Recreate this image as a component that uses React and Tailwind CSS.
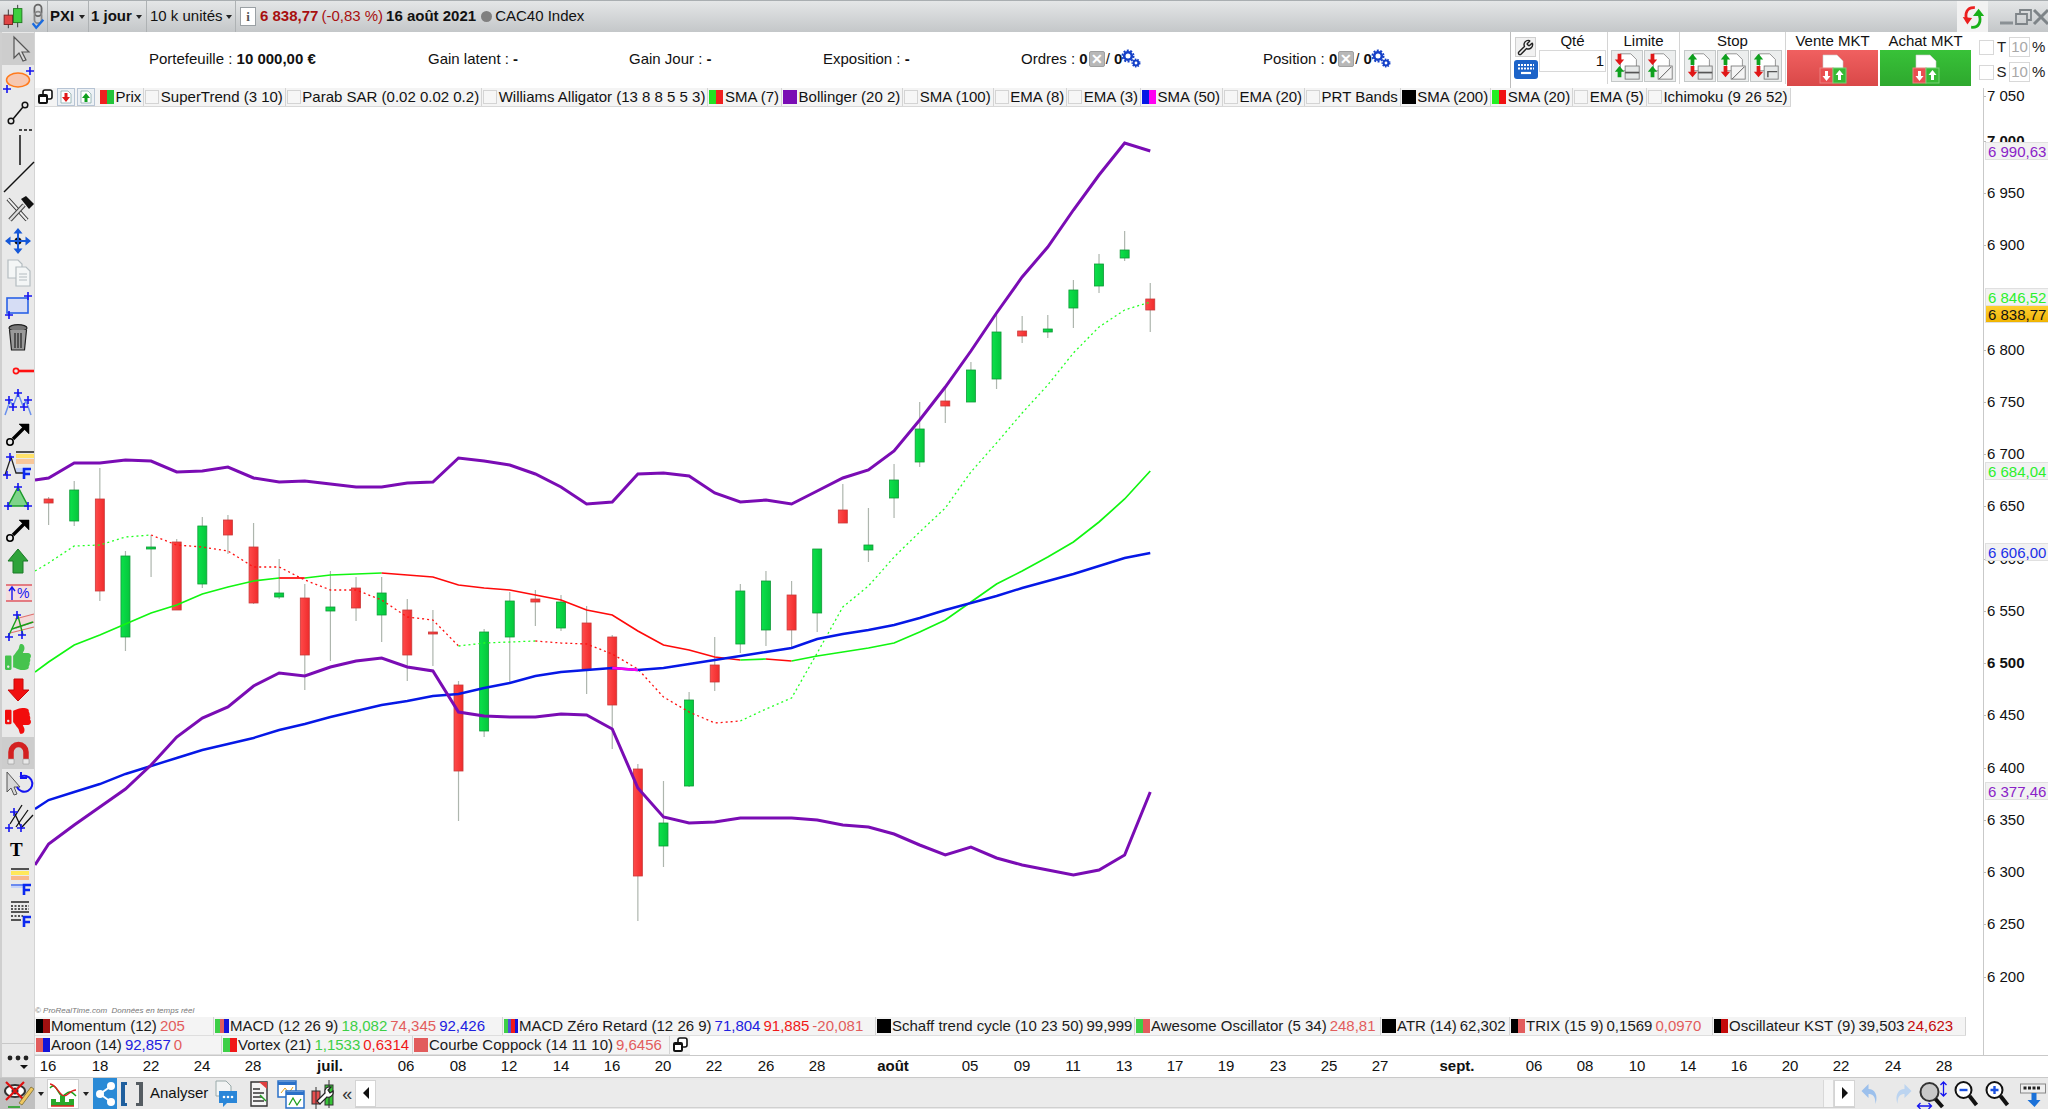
import { FaThumbsUp, FaThumbsDown } from "react-icons/fa";
import { Wrench } from "lucide-react";

const X = (i) => 48.6 + 25.62 * i;

// [kind, bodyTop, bodyBottom, wickTop, wickBottom]
const CANDLES = [
  ["r", 499, 503, 497, 525], ["g", 490, 521, 481, 526], ["r", 499, 591, 468, 601], ["g", 556, 637, 551, 651],
  ["g", 547, 549, 535, 577], ["r", 542, 610, 539, 610], ["g", 526, 584, 517, 588], ["r", 520, 535, 515, 554],
  ["r", 547, 603, 523, 604], ["g", 593, 597, 559, 599], ["r", 598, 655, 584, 690], ["g", 607, 611, 571, 661],
  ["r", 588, 608, 577, 621], ["g", 593, 615, 577, 642], ["r", 610, 655, 599, 681], ["r", 632, 634, 610, 666],
  ["r", 685, 771, 681, 821], ["g", 632, 731, 629, 737], ["g", 601, 637, 592, 683], ["r", 599, 602, 590, 626],
  ["g", 602, 628, 595, 631], ["r", 623, 669, 606, 694], ["r", 637, 705, 635, 749], ["r", 769, 876, 764, 921],
  ["g", 823, 846, 781, 867], ["g", 700, 786, 692, 787], ["r", 665, 682, 637, 691], ["g", 591, 644, 584, 653],
  ["g", 581, 630, 571, 646], ["r", 595, 630, 581, 647], ["g", 549, 613, 549, 632], ["r", 510, 523, 484, 523],
  ["g", 545, 550, 508, 562], ["g", 480, 498, 464, 518], ["g", 429, 462, 402, 467], ["r", 401, 406, 387, 423],
  ["g", 370, 402, 362, 402], ["g", 332, 379, 315, 389], ["r", 331, 336, 316, 343], ["g", 329, 332, 315, 338],
  ["g", 290, 308, 280, 328], ["g", 264, 286, 254, 293], ["g", 250, 258, 231, 261], ["r", 299, 310, 283, 332],
];

// the first value of each line sits at the left edge of the chart
const UPPER = [480, 478, 463, 463, 460, 461, 472, 471, 467, 478, 482, 481, 484, 487, 487, 483, 482, 458, 461, 465, 474, 487, 504, 502, 474, 473, 476, 493, 502, 500, 504, 491, 478, 470, 451, 420, 387, 351, 313, 277, 247, 210, 175, 143, 151];
const LOWER = [865, 844, 825, 807, 789, 765, 737, 718, 707, 686, 673, 676, 667, 661, 658, 667, 671, 712, 716, 717, 717, 714, 715, 729, 788, 817, 823, 822, 818, 818, 818, 820, 825, 827, 834, 845, 855, 847, 858, 865, 870, 875, 870, 855, 792];
const BLUE = [809, 800, 792, 784, 774, 766, 758, 750, 744, 738, 730, 724, 717, 711, 705, 701, 696, 694, 688, 683, 676, 672, 670, 668, 670, 668, 664, 660, 656, 652, 648, 639, 634, 630, 625, 618, 610, 603, 596, 588, 581, 574, 566, 558, 553];
const SMA20 = [672, 662, 645, 635, 624, 613, 605, 594, 587, 581, 578, 578, 575, 574, 573, 575, 577, 585, 588, 590, 595, 600, 610, 615, 631, 645, 650, 657, 660, 659, 661, 656, 652, 648, 643, 632, 620, 602, 584, 571, 557, 542, 522, 499, 471];
const SMA20_C = "gggggggggggrgggrrrrrrrrrrrrrrgrggggggggggggggg";
const SMA7 = [571, 563, 546, 545, 537, 535, 545, 547, 551, 567, 567, 580, 590, 590, 600, 617, 620, 646, 643, 642, 641, 643, 644, 654, 669, 697, 712, 723, 721, 709, 698, 653, 607, 586, 557, 532, 508, 472, 443, 413, 385, 353, 327, 310, 302];
const SMA7_C = "ggggggrrrrrrrrrrrrgggrrrrrrrrggggggggggggggggggg";

const pts = (arr) => arr.map((y, k) => `${k === 0 ? 35 : X(k - 1)},${y}`);

function runs(arr, colors) {
  const out = [];
  const p = pts(arr);
  for (let k = 1; k < arr.length; k++) {
    const c = colors[k];
    const last = out[out.length - 1];
    if (last && last.c === c) last.p.push(p[k]);
    else out.push({ c, p: [p[k - 1], p[k]] });
  }
  return out;
}

function Chart() {
  return (
    <svg className="absolute inset-0 w-full h-full" viewBox="35 88 1948 967">
      <defs>
        <linearGradient id="gb" x1="0" x2="1" y1="0" y2="0">
          <stop offset="0" stopColor="#0be04a" /><stop offset="1" stopColor="#06c63c" />
        </linearGradient>
        <linearGradient id="rb" x1="0" x2="1" y1="0" y2="0">
          <stop offset="0" stopColor="#ff4a4a" /><stop offset="1" stopColor="#f02c2c" />
        </linearGradient>
      </defs>
      {CANDLES.map(([k, t, b, wt, wb], i) => (
        <g key={i}>
          <line x1={X(i)} x2={X(i)} y1={wt} y2={wb} stroke="#aeb6ae" strokeWidth="1.2" />
          <rect x={X(i) - 4.5} y={t} width="9" height={Math.max(b - t, 2)} fill={k === "g" ? "url(#gb)" : "url(#rb)"} stroke={k === "g" ? "#109a38" : "#c93a3a"} strokeWidth="0.8" />
        </g>
      ))}
      {runs(SMA7, SMA7_C).map((r, i) => (
        <polyline key={i} points={r.p.join(" ")} fill="none" stroke={r.c === "g" ? "#22ff22" : "#ff1111"} strokeWidth="1.3" strokeDasharray="2 3" />
      ))}
      {runs(SMA20, SMA20_C).map((r, i) => (
        <polyline key={i} points={r.p.join(" ")} fill="none" stroke={r.c === "g" ? "#11f511" : "#ff0a0a"} strokeWidth="1.7" />
      ))}
      <polyline points={pts(BLUE).join(" ")} fill="none" stroke="#0618e6" strokeWidth="2.4" />
      <line x1={X(22)} x2={X(23)} y1="668" y2="670" stroke="#ff00f0" strokeWidth="2.4" />
      <polyline points={pts(UPPER).join(" ")} fill="none" stroke="#7a0cb4" strokeWidth="3" />
      <polyline points={pts(LOWER).join(" ")} fill="none" stroke="#7a0cb4" strokeWidth="3" />
    </svg>
  );
}

const Plus = ({ x, y }) => <path d={`M${x - 4} ${y}h8M${x} ${y - 4}v8`} stroke="#1414f0" strokeWidth="1.6" fill="none" />;
const BlackArrow = () => (
  <g fill="none" stroke="#000">
    <circle cx="8" cy="25" r="3.2" strokeWidth="1.6" />
    <path d="M11 22L22 11" strokeWidth="3.4" />
    <path d="M17 7h10v10z" fill="#000" strokeWidth="0.5" />
  </g>
);
const FLetter = () => <path d="M22 30V20h7M22 25h6" stroke="#0a28f0" strokeWidth="2.6" fill="none" />;

const TOOLS = [
  <g key="a"><path d="M12 4v21l5-5 4 8 3-1-4-8h7z" fill="#d8d8d8" stroke="#555" strokeWidth="1.2" /></g>,
  <g key="b"><ellipse cx="16" cy="15" rx="11.5" ry="7" fill="#f6c8b2" stroke="#ff7a1c" strokeWidth="1.5" /><Plus x={28} y={6} /><Plus x={5} y={24} /></g>,
  <g key="c" fill="none" stroke="#111" strokeWidth="1.5"><circle cx="9" cy="24" r="2.8" /><circle cx="23" cy="8" r="2.8" /><path d="M11 22L21 10" /></g>,
  <g key="d" stroke="#111" fill="none"><path d="M18 6v30" strokeWidth="1.5" /><path d="M17 1h14" strokeDasharray="3 2" strokeWidth="1.4" /></g>,
  <path key="e" d="M2 31L32 1" stroke="#111" strokeWidth="1.5" />,
  <g key="f"><path d="M6 6l19 21" stroke="#333" strokeWidth="4" /><path d="M6 6l19 21" stroke="#eee" strokeWidth="2" /><path d="M8 27L22 12" stroke="#444" strokeWidth="4.5" /><path d="M8 27L22 12" stroke="#ddd" strokeWidth="2.5" /><path d="M19 6l5-3 8 8-5 5z" fill="#111" /></g>,
  <g key="g" fill="#1658d8"><circle cx="16" cy="16" r="3.5" fill="#111" /><path d="M16 3l4.500 5.500h-9zM16 29l-4.500-5.500h9zM3 16l5.500-4.500v9zM29 16l-5.500 4.500v-9z" /><path d="M16 8v16M8 16h16" stroke="#1658d8" strokeWidth="2" /></g>,
  <g key="h" fill="#f4f6f6" stroke="#b4bcc0" strokeWidth="1.2"><path d="M6 3h10l4 4v14H6z" /><path d="M14 10h10l4 4v15H14z" /><path d="M17 17h8M17 20h8M17 23h8" /></g>,
  <g key="i"><rect x="5" y="9" width="21" height="15" fill="#d6ddf5" stroke="#2a62e6" strokeWidth="1.6" /><Plus x={26} y={7} /><Plus x={7} y={26} /></g>,
  <g key="j" fill="#9a9a9a" stroke="#222" strokeWidth="1.2"><ellipse cx="16" cy="7" rx="9" ry="3.4" fill="#777" /><path d="M7.5 9l2 20h13l2-20" /><path d="M13 12v15M16 12v15M19 12v15" /></g>,
  <g key="k" fill="none" stroke="#ff1010"><circle cx="14" cy="18" r="2.6" strokeWidth="1.6" /><path d="M17 18h15" strokeWidth="2.6" /></g>,
  <g key="l"><path d="M3 30L8 16l3 5 5-13 5 13 3-5 5 14" fill="none" stroke="#6a90ec" strokeWidth="1.5" /><Plus x={7} y={15} /><Plus x={16} y={8} /><Plus x={26} y={15} /><Plus x={11} y={22} /><Plus x={22} y={22} /></g>,
  <g key="m"><BlackArrow /></g>,
  <g key="n"><path d="M14 3h18" stroke="#111" strokeWidth="1.4" /><rect x="14" y="5" width="18" height="4" fill="#ffe26a" /><rect x="14" y="10" width="18" height="5" fill="#f8c79a" /><rect x="14" y="19" width="14" height="5" fill="#c6d4f8" /><path d="M3 26L9 8l5 16h8" fill="none" stroke="#222" strokeWidth="1.3" /><Plus x={8} y={8} /><Plus x={5} y={26} /><FLetter /></g>,
  <g key="o"><path d="M16 6L6 25h20z" fill="#7ed48a" stroke="#1a9a2a" strokeWidth="1.5" /><Plus x={16} y={6} /><Plus x={6} y={25} /><Plus x={26} y={25} /></g>,
  <g key="p"><BlackArrow /></g>,
  <path key="q" d="M16 4L6 16h5v12h10V16h5z" fill="#2ea33a" stroke="#1b7a26" strokeWidth="1" />,
  <g key="r"><rect x="4" y="8" width="26" height="16" fill="#f4dfe0" /><path d="M4 8h26M4 24h26" stroke="#e05a62" strokeWidth="1.4" /><path d="M10 23V11M7 14l3-4 3 4" stroke="#1414f0" strokeWidth="1.4" fill="none" /><text x="15" y="21" fontSize="14" fill="#1414f0">%</text></g>,
  <g key="s"><path d="M13 10L32 5v7l-19 7z" fill="#f3d9d9" /><path d="M13 10L32 5M14 19l18-6M8 24l24-6" stroke="#e0706e" strokeWidth="1.2" /><path d="M6 28l10-21 5 19" fill="none" stroke="#18a018" strokeWidth="1.4" /><path d="M10 20L31 13" stroke="#18a018" strokeWidth="1.4" /><Plus x={15} y={6} /><Plus x={7} y={28} /><Plus x={20} y={26} /></g>,
  null,
  <path key="t" d="M16 28L6 17h6V6h9v11h6z" fill="#f01010" stroke="#c80808" />,
  null,
  <g key="u" fill="none"><path d="M9 24V15a7.500 7.500 0 0 1 15 0v9" stroke="#d32020" strokeWidth="5.500" /><path d="M6 22h6v5H6zM21 22h6v5h-6z" fill="#e8e8e8" stroke="#999" strokeWidth="0.6" /></g>,
  <g key="v"><path d="M5 3v20l4-4 3 7 3-1-3-7h6z" fill="#d8d8d8" stroke="#555" /><path d="M18 8a8 8 0 1 1-3 10M19 3v6h6" fill="none" stroke="#1414f0" strokeWidth="2" /></g>,
  <g key="w"><path d="M8 23L20 4M14 26L26 9M20 26L31 14" stroke="#111" strokeWidth="1.3" /><path d="M12 11L20 28" stroke="#111" strokeWidth="1.3" /><Plus x={12} y={11} /><Plus x={7} y={27} /><Plus x={19} y={27} /></g>,
  <text key="x" x="8" y="23" fontSize="19" fontWeight="700" fontFamily="Liberation Serif">T</text>,
  <g key="y"><path d="M9 4h18" stroke="#111" strokeWidth="1.4" /><rect x="9" y="6" width="18" height="4" fill="#ffe85a" /><rect x="9" y="11" width="18" height="4" fill="#f8b88a" /><rect x="9" y="19" width="14" height="4" fill="#c6d4f8" /><path d="M9 20h12" stroke="#3860e8" strokeWidth="1.3" /><FLetter /></g>,
  <g key="z" stroke="#222" strokeWidth="1.3"><path d="M9 5h18M9 15h18M9 23h10" /><path d="M9 9h18M9 12h18M9 19h12" strokeDasharray="2 1.500" /><FLetter /></g>,
];

function ToolBar() {
  return (
    <div className="w-[35px] shrink-0 bg-[#e9e9e9] border-l-2 border-r border-l-[#cfcfcf] border-r-[#d4d4d4] flex flex-col pt-px">
      {TOOLS.map((t, i) => (
        <div key={i} className={"h-8 w-8 shrink-0 flex items-center justify-center " + (i === 0 || i === 22 ? "bg-[#cdcdcd] " : "")}>
          {i === 19 ? <FaThumbsUp className="w-[26px] h-[26px] text-[#46c34e]" />
            : i === 21 ? <FaThumbsDown className="w-[26px] h-[26px] text-[#f20c0c]" />
            : <svg viewBox="0 0 32 32" className="w-8 h-8 overflow-visible">{t}</svg>}
        </div>
      ))}
      <div className="mt-auto h-[34px] border-t border-[#c8c8c8] flex flex-col items-center pt-[10px]">
        <svg viewBox="0 0 24 18" className="w-6 h-[18px]">
          <circle cx="4" cy="4" r="2.400" fill="#222" /><circle cx="12" cy="4" r="2.400" fill="#222" /><circle cx="20" cy="4" r="2.400" fill="#222" />
          <path d="M14 11h8l-4 4z" fill="#111" />
        </svg>
      </div>
    </div>
  );
}

const Caret = ({ c = "" }) => <span className={"inline-block w-0 h-0 border-x-[3.5px] border-x-transparent border-t-[4px] border-t-[#222] " + c} />;

function TopBar() {
  return (
    <div className="h-8 shrink-0 flex items-center bg-gradient-to-b from-[#e4e6e7] to-[#c4c7c9] border-t border-[#a9aeb1] text-[15px] text-[#111]">
      <svg viewBox="0 0 26 30" className="w-[26px] h-[28px] shrink-0">
        <path d="M8 7v20" stroke="#333" /><rect x="3.500" y="13" width="9" height="10" fill="#e04545" stroke="#7a2222" />
        <path d="M18 2v24" stroke="#333" /><rect x="13.500" y="6" width="9" height="15" fill="#3ecf3e" stroke="#1f7a1f" />
      </svg>
      <svg viewBox="0 0 18 30" className="ml-[4px] w-[16px] h-[30px] shrink-0">
        <rect x="5" y="1" width="8" height="13" rx="4" fill="none" stroke="#666" strokeWidth="2" /><rect x="5" y="9" width="8" height="13" rx="4" fill="none" stroke="#888" strokeWidth="2" />
        <path d="M3 22l4 5 8-9" fill="none" stroke="#1a6be0" strokeWidth="2.600" />
      </svg>
      <div className="ml-[1px] w-[41px] h-full border-l border-[#aeb2b4] flex items-center pl-[2px] gap-[5px] font-bold">PXI<Caret /></div>
      <div className="w-[58px] h-full border-l border-[#aeb2b4] flex items-center pl-[2px] gap-[4px] font-bold whitespace-nowrap">1 jour<Caret /></div>
      <div className="w-[89px] h-full border-l border-[#aeb2b4] flex items-center pl-[3px] gap-[3px] whitespace-nowrap">10 k unités<Caret /></div>
      <div className="h-full border-l border-[#aeb2b4] flex items-center pl-[4px] whitespace-nowrap">
        <span className="w-4 h-[19px] bg-white border border-[#9aa0a4] flex items-center justify-center text-[13px] font-bold text-[#555] [font-family:'Liberation_Serif',serif]">i</span>
        <span className="ml-[4px] font-bold text-[#a80f0f]">6 838,77</span>
        <span className="ml-[3px] text-[#a80f0f]">(-0,83 %)</span>
        <span className="ml-[3px] font-bold">16 août 2021</span>
        <span className="ml-[5px] w-[11px] h-[11px] rounded-full bg-[#808080]" />
        <span className="ml-[3px]">CAC40 Index</span>
      </div>
      <div className="ml-auto h-full w-[31px] bg-[#f2f2f2] flex items-center justify-center">
        <svg viewBox="0 0 28 28" className="w-[26px] h-[26px]">
          <path d="M16 4C8 3 4 10 8 19" fill="none" stroke="#ec2020" strokeWidth="3" /><path d="M3 14l5 8 5-7z" fill="#ec2020" />
          <path d="M12 25c8 1 12-6 8-15" fill="none" stroke="#18b018" strokeWidth="3" /><path d="M14 13l6-8 6 8z" fill="#18b018" />
        </svg>
      </div>
      <svg viewBox="0 0 60 20" className="w-[60px] h-5 shrink-0">
        <path d="M12 16h13" stroke="#8a9094" strokeWidth="3" />
        <path d="M28 7h11v10H28z M32 7V3h11v10h-4" fill="none" stroke="#7e8488" strokeWidth="1.800" />
        <path d="M46 3l14 14M60 3L46 17" stroke="#7e8488" strokeWidth="3" />
      </svg>
    </div>
  );
}

const Gear = () => (
  <svg viewBox="0 0 20 20" className="w-[20px] h-[20px] -ml-[1px]">
    <circle cx="7" cy="7" r="3.800" fill="none" stroke="#1440c8" strokeWidth="2.600" />
    <circle cx="7" cy="7" r="5.600" fill="none" stroke="#1440c8" strokeWidth="1.800" strokeDasharray="2 1.500" />
    <circle cx="15" cy="14" r="2.400" fill="none" stroke="#1440c8" strokeWidth="2" />
    <circle cx="15" cy="14" r="3.800" fill="none" stroke="#1440c8" strokeWidth="1.400" strokeDasharray="1.500 1.200" />
  </svg>
);
const XBox = () => (
  <span className="w-[16px] h-[16px] rounded-[2px] bg-[#b8b8b8] border border-[#a0a0a0] text-white text-[14px] leading-[14px] font-bold flex items-center justify-center mx-[1px]">✕</span>
);

const Up = ({ x, y, s = 1 }) => <path transform={`translate(${x} ${y}) scale(${s})`} d="M0 -6l5 6h-3v6h-4v-6h-3z" fill="#0ea01e" />;
const Down = ({ x, y, s = 1 }) => <path transform={`translate(${x} ${y}) scale(${s})`} d="M0 6l5 -6h-3v-6h-4v6h-3z" fill="#e01818" />;

function OrderBtn({ first, glyph }) {
  return (
    <div className="w-[32px] h-[32px] bg-[#eceeee] border border-[#c4c8c8] flex items-center justify-center">
      <svg viewBox="0 0 32 32" className="w-[32px] h-[32px]">
        <path d="M9 3h11l6 6v12H9z" fill="#fff" stroke="#777" strokeWidth="0.8" />
        <rect x="14" y="16" width="15" height="14" fill={glyph === "slash" ? "#f4f4f4" : "#e6e8e8"} stroke="#777" strokeWidth="0.9" />
        {glyph === "bars" && <path d="M14 23h15" stroke="#555" strokeWidth="1.800" />}
        {glyph === "slash" && <path d="M15 30l13-13" stroke="#555" strokeWidth="1" />}
        {glyph === "step" && <path d="M18 28v-6h10" fill="none" stroke="#555" strokeWidth="1.500" />}
        {first === "down" ? <><Down x={8} y={9} /><Up x={8} y={22} /></> : <><Up x={8} y={9} /><Down x={8} y={22} /></>}
      </svg>
    </div>
  );
}

function MktBtn({ from, to, label }) {
  return (
    <div className="flex flex-col items-center w-[91px]">
      <span className="h-[18px] leading-[18px]">{label}</span>
      <div className={"w-full h-[36px] flex items-center justify-center bg-gradient-to-b " + from + " " + to}>
        <svg viewBox="0 0 30 36" className="w-[30px] h-[36px]">
          <path d="M5 5h14l6 6v10H5z" fill="#fff" stroke="#ccc" strokeWidth="0.6" />
          <rect x="2" y="18" width="13" height="15" fill="#e94e50" stroke="#ec8080" />
          <rect x="15" y="18" width="13" height="15" fill="#36b934" stroke="#74d074" />
          <path d="M8.500 31l-4-5h2.500v-5h3v5h2.500z" fill="#fff" />
          <path d="M21.500 20l4 5H23v5h-3v-5h-2.500z" fill="#fff" />
        </svg>
      </div>
    </div>
  );
}

function Header() {
  return (
    <div className="h-14 shrink-0 flex bg-white text-[15px] text-[#111] relative">
      <div className="flex-1 flex items-center pl-[114px] pb-[2px] whitespace-nowrap">
        <div className="w-[279px]">Portefeuille : <b>10 000,00 €</b></div>
        <div className="w-[201px]">Gain latent : <b>-</b></div>
        <div className="w-[194px]">Gain Jour : <b>-</b></div>
        <div className="w-[198px]">Exposition : <b>-</b></div>
        <div className="w-[242px] flex items-center">Ordres :&nbsp;<b>0</b><XBox />/&nbsp;<b>0</b><Gear /></div>
        <div className="flex items-center">Position :&nbsp;<b>0</b><XBox />/&nbsp;<b>0</b><Gear /></div>
      </div>
      <div className="w-[538px] shrink-0 border-l border-[#bcbcbc] flex pl-[2px]">
        <div className="w-[25px] flex flex-col items-center pt-[5px] gap-[3px]">
          <div className="w-[21px] h-[20px] bg-[#f1f1f1] border border-[#cfcfcf] flex items-center justify-center"><Wrench className="w-[17px] h-[17px] text-[#222]" /></div>
          <svg viewBox="0 0 24 19" className="w-[24px] h-[19px]">
            <rect width="24" height="19" rx="3" fill="#1c63c8" />
            <path d="M4 5h16M4 8.500h16" stroke="#fff" strokeWidth="2.200" strokeDasharray="2 1" />
            <path d="M7 13h10" stroke="#fff" strokeWidth="2.200" />
          </svg>
        </div>
        <div className="w-[70px] flex flex-col items-center border-r border-[#d4d4d4] mb-[4px]">
          <span className="h-[18px] leading-[18px]">Qté</span>
          <div className="w-[67px] h-[22px] border border-[#d8d8d8] text-right pr-[1px] leading-[20px]">1</div>
        </div>
        <div className="w-[72px] flex flex-col items-center border-r border-[#d4d4d4] mb-[4px]">
          <span className="h-[18px] leading-[18px]">Limite</span>
          <div className="flex gap-[1px]"><OrderBtn first="down" glyph="bars" /><OrderBtn first="down" glyph="slash" /></div>
        </div>
        <div className="w-[106px] flex flex-col items-center border-r border-[#d4d4d4] mb-[4px]">
          <span className="h-[18px] leading-[18px]">Stop</span>
          <div className="flex gap-[1px]"><OrderBtn first="up" glyph="bars" /><OrderBtn first="up" glyph="slash" /><OrderBtn first="up" glyph="step" /></div>
        </div>
        <div className="flex gap-[2px] ml-[1px]">
          <MktBtn from="from-[#f06060]" to="to-[#d94848]" label="Vente MKT" />
          <MktBtn from="from-[#38c238]" to="to-[#2ea82e]" label="Achat MKT" />
        </div>
        <div className="ml-[8px] flex flex-col pt-[6px] gap-[7px] text-[#222]">
          {["T", "S"].map((l) => (
            <div key={l} className="flex items-center h-[18px]">
              <span className="w-[15px] h-[15px] border border-[#d8d8d8]" />
              <span className="w-[15px] text-center">{l}</span>
              <span className="w-[21px] h-[20px] border border-[#d8d8d8] text-[#a8a8a8] text-center leading-[18px]">10</span>
              <span className="ml-[2px]">%</span>
            </div>
          ))}
        </div>
      </div>
    </div>
  );
}

const Cascade = () => (
  <svg viewBox="0 0 16 16" className="w-4 h-4 shrink-0">
    <rect x="6" y="1" width="9" height="9" rx="2" fill="#fff" stroke="#111" strokeWidth="1.600" />
    <rect x="1" y="5" width="10" height="10" rx="2" fill="#111" />
    <rect x="3" y="8" width="6" height="5" fill="#fff" />
  </svg>
);
const DocArrow = ({ up }) => (
  <span className="w-[18px] h-[18px] bg-[#edf1f5] border border-[#b7c4d4] flex items-center justify-center shrink-0">
    <svg viewBox="0 0 14 14" className="w-[14px] h-[14px]">
      <path d="M2 1h7l3 3v9H2z" fill="#fff" stroke="#8aa" strokeWidth="0.800" />
      {up ? <path d="M7 3l4 5H8.500v4h-3V8H3z" fill="#0ea01e" /> : <path d="M7 12l4-5H8.500V3h-3v4H3z" fill="#e01818" />}
    </svg>
  </span>
);

const Swatch = ({ colors = [] }) => (
  <span className={"w-[14px] h-[14px] shrink-0 flex " + (colors.length ? "" : "bg-[#f6f6f6] border border-[#d4d4d4]")}>
    {colors.map((c, i) => <span key={i} className="flex-1" style={{ background: c }} />)}
  </span>
);

const LEGEND = [
  ["Prix", ["#f02020", "#22c43a"]], ["SuperTrend (3 10)"], ["Parab SAR (0.02 0.02 0.2)"], ["Williams Alligator (13 8 8 5 5 3)"],
  ["SMA (7)", ["#22e022", "#f02020"]], ["Bollinger (20 2)", ["#7a0cb4"]], ["SMA (100)"], ["EMA (8)"], ["EMA (3)"],
  ["SMA (50)", ["#0618e6", "#ff00f0"]], ["EMA (20)"], ["PRT Bands"], ["SMA (200)", ["#000"]], ["SMA (20)", ["#22f022", "#f01010"]],
  ["EMA (5)"], ["Ichimoku (9 26 52)"],
];

function Legend() {
  return (
    <div className="absolute left-0 top-0 h-[19px] flex items-center bg-[#f4f4f4] border-b border-[#d8d8d8] text-[15px] leading-[18px] text-[#111] whitespace-nowrap pl-[2px]">
      <Cascade />
      <span className="ml-[4px]"><DocArrow /></span>
      <span className="ml-[2px] mr-[4px]"><DocArrow up /></span>
      {LEGEND.map(([t, c]) => (
        <div key={t} className="flex items-center gap-[1.5px] pl-[1px] pr-[2px] border-r border-[#d4d4d4] h-full">
          <Swatch colors={c} />
          <span>{t}</span>
        </div>
      ))}
    </div>
  );
}

const INK = "#1a1a1a", SALMON = "#e25c5c", GREEN = "#3ccf46", BLUEV = "#2020e0", RED = "#f01818", DARKRED = "#c40a0a";
// label, swatch colours, values, width of the cell
const ROW1 = [
  ["Momentum (12)", ["#000", "#a01010"], [["205", SALMON]], 179],
  ["MACD (12 26 9)", ["#3ccf46", "#e25c5c", "#1414d8"], [["18,082", GREEN], ["74,345", SALMON], ["92,426", BLUEV]], 289],
  ["MACD Zéro Retard (12 26 9)", ["#3ccf46", "#5050d8", "#f01818", "#1414d8"], [["71,804", BLUEV], ["91,885", RED], ["-20,081", SALMON]], 373],
  ["Schaff trend cycle (10 23 50)", ["#000"], [["99,999", INK]], 259],
  ["Awesome Oscillator (5 34)", ["#3ccf46", "#e25c5c"], [["248,81", SALMON]], 246],
  ["ATR (14)", ["#000"], [["62,302", INK]], 129],
  ["TRIX (15 9)", ["#000", "#e25c5c"], [["0,1569", INK], ["0,0970", SALMON]], 203],
  ["Oscillateur KST (9)", ["#000", "#c40a0a"], [["39,503", INK], ["24,623", DARKRED]], 253],
];
const ROW2 = [
  ["Aroon (14)", ["#e25c5c", "#1414d8"], [["92,857", BLUEV], ["0", SALMON]], 187],
  ["Vortex (21)", ["#3ccf46", "#f01818"], [["1,1533", GREEN], ["0,6314", RED]], 191],
  ["Courbe Coppock (14 11 10)", ["#e25c5c"], [["9,6456", SALMON]], 257],
];

function IndRow({ items, extra }) {
  return (
    <div className="h-[19px] flex items-center bg-[#f4f4f4] border-b border-[#dedede] w-fit text-[15px] text-[#1a1a1a] whitespace-nowrap">
      {items.map(([t, c, vals, w]) => (
        <div key={t} className="flex items-center h-full gap-[1px] pl-[1px] border-r border-[#d4d4d4] shrink-0" style={{ width: w }}>
          <Swatch colors={c} />
          <span>{t}</span>
          <span className="flex gap-[3px] ml-[2px]">{vals.map(([v, col]) => <span key={v} style={{ color: col }}>{v}</span>)}</span>
        </div>
      ))}
      {extra}
    </div>
  );
}

// 6 850 stays fully covered by the tag of the moving average in the picture
const TICKS = [
  [7050, 96], [7000, 141], [6950, 193], [6900, 245], [6800, 350], [6750, 402], [6700, 454], [6650, 506], [6600, 559],
  [6550, 611], [6500, 663], [6450, 715], [6400, 768], [6350, 820], [6300, 872], [6250, 924], [6200, 977],
];
const TAGS = [
  ["6 990,63", 151, "text-[#8a22c8]", "bg-[#f2f2f2]"], ["6 846,52", 297, "text-[#2cf02c]", "bg-[#f2f2f2]"],
  ["6 838,77", 314, "text-[#111]", "bg-gradient-to-b from-[#ffcf2e] to-[#f0b400]"], ["6 684,04", 471, "text-[#2cf02c]", "bg-[#f2f2f2]"],
  ["6 606,00", 552, "text-[#1a30e8]", "bg-[#f2f2f2]"], ["6 377,46", 791, "text-[#8a22c8]", "bg-[#f2f2f2]"],
];
const fmt = (v) => `${String(v)[0]} ${String(v).slice(1)}`;

function Axis() {
  return (
    <div className="w-[65px] shrink-0 relative bg-white border-l border-[#c9c9c9] text-[15px] text-[#111] whitespace-nowrap overflow-hidden">
      {TICKS.map(([v, y]) => (
        <div key={v} className={"absolute left-0 flex items-center h-[18px] " + (v === 7000 || v === 6500 ? "font-bold" : "")} style={{ top: y - 88 - 9 }}>
          <span className="w-[2px] h-px bg-[#bbb] mr-[1px]" />{fmt(v)}
        </div>
      ))}
      {TAGS.map(([t, y, c, bg]) => (
        <div key={t} className={"absolute left-[1px] w-[64px] h-[18px] leading-[18px] pl-[2px] border border-[#e0e0e0] border-r-0 " + c + " " + bg} style={{ top: y - 88 - 9 }}>{t}</div>
      ))}
    </div>
  );
}

const DATES = [
  ["16", 48], ["18", 100], ["22", 151], ["24", 202], ["28", 253], ["juil.", 330, 1], ["06", 406], ["08", 458], ["12", 509], ["14", 561], ["16", 612], ["20", 663],
  ["22", 714], ["26", 766], ["28", 817], ["août", 893, 1], ["05", 970], ["09", 1022], ["11", 1073], ["13", 1124], ["17", 1175], ["19", 1226], ["23", 1278], ["25", 1329],
  ["27", 1380], ["sept.", 1457, 1], ["06", 1534], ["08", 1585], ["10", 1637], ["14", 1688], ["16", 1739], ["20", 1790], ["22", 1841], ["24", 1893], ["28", 1944],
];

function DateAxis() {
  return (
    <div className="h-[22px] shrink-0 relative bg-white border-t border-[#c9c9c9] text-[15px] leading-[20px] text-[#111]">
      {DATES.map(([t, x, bold], i) => (
        <span key={i} className={"absolute top-0 -translate-x-1/2 " + (bold ? "font-bold" : "")} style={{ left: x - 35 }}>{t}</span>
      ))}
    </div>
  );
}

function BottomBar() {
  return (
    <div className="h-8 shrink-0 flex items-center bg-[#e9e9e9] border-t border-[#c9c9c9] text-[15px] text-[#111]">
      <div className="w-[35px] h-full bg-[#c0c0c0] flex items-center justify-center">
        <svg viewBox="0 0 32 30" className="w-8 h-[30px]">
          <ellipse cx="13" cy="12" rx="10" ry="6" fill="#fff" stroke="#333" strokeWidth="2" /><circle cx="13" cy="12" r="3.500" fill="#333" />
          <path d="M4 3l18 18M22 3L4 21" stroke="#e01010" strokeWidth="2.200" />
          <path d="M17 24L29 8l3 2-12 16z" fill="#f0c860" stroke="#7a6a30" strokeWidth="0.800" />
          <path d="M6 28h12" stroke="#18a018" strokeWidth="1.500" />
        </svg>
      </div>
      <Caret c="ml-[3px]" />
      <div className="ml-[3px] w-[32px] h-[30px] bg-white border border-[#cfcfcf] shrink-0">
        <svg viewBox="0 0 30 28" className="w-[30px] h-[28px]">
          <path d="M2 8c6-8 9 10 13 8s6-8 13 0" fill="none" stroke="#18a018" strokeWidth="1.400" />
          <path d="M2 4c6 0 10 12 14 12s6-6 12-6" fill="none" stroke="#e02020" strokeWidth="1.400" />
          <path d="M3 26v-7h5v3h4v-6h5v6h4v-3h5v7z" fill="#2aa82a" /><path d="M3 26h23" stroke="#e02020" strokeWidth="1.500" />
        </svg>
      </div>
      <Caret c="ml-[4px]" />
      <div className="ml-[4px] w-6 h-full bg-[#2a8ad6] flex items-center justify-center">
        <svg viewBox="0 0 22 26" className="w-[22px] h-[26px]">
          <path d="M6 13L17 5M6 13l11 8" stroke="#fff" strokeWidth="2" /><circle cx="6" cy="13" r="4" fill="#fff" /><circle cx="17" cy="5" r="4" fill="#fff" /><circle cx="17" cy="21" r="4" fill="#fff" />
        </svg>
      </div>
      <svg viewBox="0 0 24 28" className="ml-[3px] w-6 h-7 shrink-0">
        <path d="M1 2h6v3H5v18h2v3H1z" fill="#1f5f9e" /><path d="M23 2h-7v3h3v18h-3v3h7z" fill="#555c62" />
      </svg>
      <span className="ml-[6px]">Analyser</span>
      <svg viewBox="0 0 24 28" className="ml-[6px] w-6 h-7 shrink-0">
        <path d="M2 1h10l5 5v10H2z" fill="#f2f4f4" stroke="#9aa" /><path d="M5 11h18v12H13l-4 4v-4H5z" fill="#2a86d8" />
        <circle cx="10" cy="17" r="1.300" fill="#fff" /><circle cx="14" cy="17" r="1.300" fill="#fff" /><circle cx="18" cy="17" r="1.300" fill="#fff" />
      </svg>
      <svg viewBox="0 0 20 28" className="ml-[11px] w-5 h-7 shrink-0">
        <path d="M2 2h16v24H2z" fill="#f4f4f4" stroke="#333" strokeWidth="1.400" /><path d="M10 2h8v7z" fill="#e04040" />
        <path d="M4 9h7M4 13h11M4 17h9M4 21h11" stroke="#333" strokeWidth="1.500" /><path d="M11 15l6 6" stroke="#22a022" strokeWidth="1.500" />
      </svg>
      <svg viewBox="0 0 28 30" className="ml-[8px] w-7 h-[30px] shrink-0">
        <rect x="1" y="2" width="18" height="16" fill="#fff" stroke="#2a70c8" strokeWidth="1.500" /><path d="M1 3h18v3H1z" fill="#2a70c8" /><path d="M4 14l4-5 4 5 4-6" fill="none" stroke="#e0a020" />
        <rect x="9" y="12" width="18" height="17" fill="#fff" stroke="#2a70c8" strokeWidth="1.500" /><path d="M9 13h18v3H9z" fill="#2a70c8" /><path d="M12 26l4-7 4 7 4-6" fill="none" stroke="#20a020" strokeWidth="1.300" />
      </svg>
      <svg viewBox="0 0 24 30" className="ml-[6px] w-6 h-[30px] shrink-0">
        <rect x="1" y="12" width="8" height="13" fill="#e85050" stroke="#333" /><rect x="14" y="6" width="8" height="20" fill="#36c436" stroke="#333" />
        <path d="M18 1v28M5 8v22" stroke="#333" />
        <path d="M6 22l8-8c-1-4 2-7 6-6l-3 3 2 3 3-2c1 4-3 7-6 6l-7 7z" fill="#fff" stroke="#222" strokeWidth="1.200" />
      </svg>
      <span className="ml-[7px] w-[12px] text-[#333] leading-none text-[18px]">«</span>
      <div className="ml-[1px] flex-1 h-[28px] flex bg-[#ebebeb] border-b border-[#d0d0d0]">
        <div className="w-[21px] bg-white border border-[#d4d4d4] flex items-center justify-center"><span className="w-0 h-0 border-y-[6px] border-y-transparent border-r-[6px] border-r-[#111]" /></div>
        <div className="flex-1" />
        <div className="w-[11px] bg-[#f5f5f5] border-x border-[#d8d8d8]" />
        <div className="w-[21px] bg-white border border-[#d4d4d4] flex items-center justify-center"><span className="w-0 h-0 border-y-[6px] border-y-transparent border-l-[6px] border-l-[#111]" /></div>
      </div>
      <svg viewBox="0 0 190 30" className="w-[193px] h-[30px] shrink-0">
        <path d="M12 5L5 12l7 7v-4c4 0 7 2 7 10 3-9-1-15-7-15z" fill="#9cc0ec" />
        <path d="M48 5l7 7-7 7v-4c-4 0-7 2-7 10-3-9 1-15 7-15z" fill="#bcd4f0" />
        <g transform="translate(-5 0)">
          <circle cx="78" cy="13" r="9" fill="#c8c8c8" stroke="#333" strokeWidth="2" /><path d="M84 20l7 8" stroke="#111" strokeWidth="4" />
          <path d="M92 3v14M89 6l3-3 3 3M89 14l3 3 3-3M66 27h14M69 24l-3 3 3 3M77 24l3 3-3 3" stroke="#1414f0" strokeWidth="1.300" fill="none" />
        </g>
        <g transform="translate(-6 0)">
          <circle cx="113" cy="11" r="8" fill="#fff" stroke="#111" strokeWidth="2" /><path d="M109 11h8" stroke="#1a50e0" strokeWidth="2.400" /><path d="M119 17l7 9" stroke="#111" strokeWidth="4" />
          <circle cx="144" cy="11" r="8" fill="#fff" stroke="#111" strokeWidth="2" /><path d="M140 11h8M144 7v8" stroke="#1a50e0" strokeWidth="2.400" /><path d="M150 17l7 9" stroke="#111" strokeWidth="4" />
        </g>
        <rect x="164" y="5" width="25" height="9" fill="#eee" stroke="#888" /><path d="M167 9h18" stroke="#222" strokeWidth="3" strokeDasharray="3 1.500" />
        <path d="M175 14h5v7h4l-6 7-7-7h4z" fill="#1a70d8" />
      </svg>
    </div>
  );
}

export default function App() {
  return (
    <div className="w-[2048px] h-[1109px] overflow-hidden flex flex-col bg-white [font-family:'Liberation_Sans',Arial,sans-serif]">
      <TopBar />
      <div className="flex-1 flex min-h-0">
        <ToolBar />
        <div className="flex-1 flex flex-col min-w-0">
          <Header />
          <div className="flex-1 flex min-h-0">
            <div className="flex-1 relative overflow-hidden">
              <Chart />
              <Legend />
              <div className="absolute left-0 bottom-0 flex flex-col">
                <span className="text-[8px] italic text-[#777] leading-[10px] mb-[1px]">© ProRealTime.com &nbsp;Données en temps réel</span>
                <IndRow items={ROW1} />
                <IndRow items={ROW2} extra={<span className="ml-[2px] mr-[2px]"><Cascade /></span>} />
              </div>
            </div>
            <Axis />
          </div>
          <DateAxis />
        </div>
      </div>
      <BottomBar />
    </div>
  );
}
